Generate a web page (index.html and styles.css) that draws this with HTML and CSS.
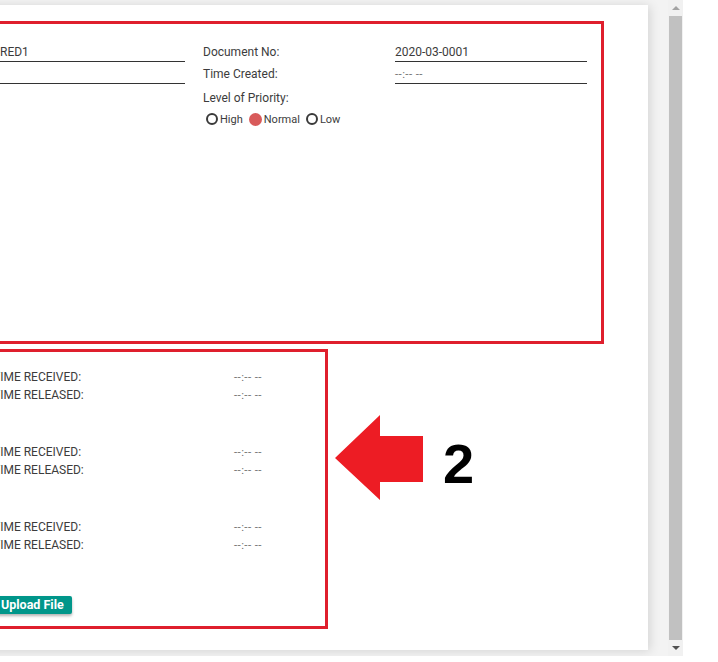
FILE: index.html
```html
<!DOCTYPE html>
<html>
<head>
<meta charset="utf-8">
<link rel="stylesheet" href="styles.css">
</head>
<body>
<div class="frame">
  <div class="viewport">
    <div class="card">
      <div class="box box1">
        <div class="col">
          <div class="field"><span class="indent">RED1</span></div>
          <div class="field"></div>
        </div>
        <div class="col">
          <div class="label">Document No:</div>
          <div class="label">Time Created:</div>
          <div class="label label-gap">Level of Priority:</div>
          <div class="radios">
            <span class="radio"></span><span class="rlabel">High</span>
            <span class="radio checked"></span><span class="rlabel">Normal</span>
            <span class="radio"></span><span class="rlabel">Low</span>
          </div>
        </div>
        <div class="col">
          <div class="field">2020-03-0001</div>
          <div class="field value">--:-- --</div>
        </div>
      </div>
      <div class="box box2">
        <div class="group">
          <div class="trow"><span>TIME RECEIVED:</span><span class="value">--:-- --</span></div>
          <div class="trow"><span>TIME RELEASED:</span><span class="value">--:-- --</span></div>
        </div>
        <div class="group">
          <div class="trow"><span>TIME RECEIVED:</span><span class="value">--:-- --</span></div>
          <div class="trow"><span>TIME RELEASED:</span><span class="value">--:-- --</span></div>
        </div>
        <div class="group">
          <div class="trow"><span>TIME RECEIVED:</span><span class="value">--:-- --</span></div>
          <div class="trow"><span>TIME RELEASED:</span><span class="value">--:-- --</span></div>
        </div>
        <div class="btn-row"><span class="btn">Upload File</span></div>
      </div>
    </div>
  </div>
  <div class="scrollbar">
    <div class="sb-btn"><span class="tri up"></span></div>
    <div class="thumb"></div>
    <div class="sb-btn"><span class="tri down"></span></div>
  </div>
  <svg class="arrow" width="89" height="86" viewBox="0 0 89 86"><polygon points="0,43 45,0 45,21 88,21 88,67 45,67 45,85" fill="#ed1c24"/></svg>
  <div class="num">2</div>
</div>
</body>
</html>
```

FILE: styles.css
```css
html, body {
  margin: 0;
  padding: 0;
  background: #ffffff;
  overflow: hidden;
}
body {
  font-family: Roboto, "Liberation Sans", sans-serif;
  font-size: 12px;
  color: #3c3c3c;
}
.frame {
  position: relative;
  width: 683px;
  height: 656px;
  display: flex;
  background: #f3f3f3;
  overflow: hidden;
}
.viewport {
  width: 668px;
  padding-top: 5px;
  overflow: hidden;
}
.card {
  margin-left: -30px;
  width: 678px;
  height: 645px;
  background: #fff;
  box-shadow: 2px 1px 10px rgba(0, 0, 0, 0.13);
  padding: 16px 0 0 10px;
  box-sizing: border-box;
}
.box {
  border: 3px solid #df1f2d;
  box-sizing: border-box;
}
.box1 {
  width: 624px;
  height: 323px;
  padding: 16px 0 0 10px;
  display: grid;
  grid-template-columns: 192px 174px 192px;
  column-gap: 18px;
  align-items: start;
}
.field {
  height: 22px;
  box-sizing: border-box;
  padding-top: 3px;
  line-height: 19px;
  border-bottom: 1px solid #333;
  white-space: nowrap;
}
.indent {
  padding-left: 7px;
}
.value {
  color: #707070;
  font-size: 11.5px;
  letter-spacing: 0.4px;
}
.label {
  height: 22px;
  box-sizing: border-box;
  padding-top: 3px;
  line-height: 19px;
}
.label-gap {
  margin-top: 2px;
}
.radios {
  height: 22px;
  display: flex;
  align-items: center;
  padding-left: 3px;
  font-size: 11px;
}
.radio {
  width: 12px;
  height: 12px;
  box-sizing: border-box;
  border: 2px solid #3a3a3a;
  border-radius: 50%;
  margin-right: 2px;
}
.radio.checked {
  width: 13px;
  height: 13px;
  border: none;
  background: #d85a5a;
}
.rlabel {
  margin-right: 6px;
}
.box2 {
  margin-top: 5px;
  width: 348px;
  height: 280px;
  padding: 16px 0 0 10px;
}
.trow {
  display: grid;
  grid-template-columns: 241px auto;
  height: 18px;
  line-height: 18px;
  white-space: nowrap;
}
.group + .group {
  margin-top: 39px;
}
.btn-row {
  margin-top: 42px;
}
.btn {
  display: inline-block;
  height: 18px;
  line-height: 18px;
  padding: 0 8px;
  background: #00968a;
  color: #fff;
  font-weight: bold;
  font-size: 12.5px;
  border-radius: 2px;
  box-shadow: 0 2px 3px rgba(0, 0, 0, 0.3);
}
.scrollbar {
  width: 15px;
  display: flex;
  flex-direction: column;
  background: #f1f1f1;
}
.sb-btn {
  height: 16px;
  display: flex;
  align-items: center;
  justify-content: center;
}
.thumb {
  flex: 1;
  margin: 0 1px;
  background: #c1c1c1;
}
.tri {
  width: 0;
  height: 0;
  border-left: 4px solid transparent;
  border-right: 4px solid transparent;
}
.tri.up {
  border-bottom: 4px solid #a3a3a3;
}
.tri.down {
  border-top: 4px solid #505050;
}
.arrow {
  position: absolute;
  left: 335px;
  top: 415px;
}
.num {
  position: absolute;
  left: 443px;
  top: 436px;
  font-family: "Liberation Sans", Arial, sans-serif;
  font-weight: bold;
  font-size: 56px;
  line-height: 1;
  color: #000;
}
```
